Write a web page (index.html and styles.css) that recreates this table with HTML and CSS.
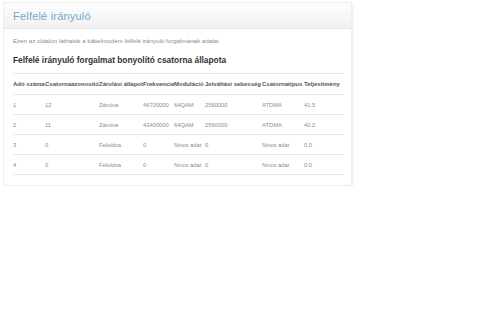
FILE: index.html
```html
<!DOCTYPE html>
<html lang="hu">
<head>
<meta charset="utf-8">
<link rel="stylesheet" href="styles.css">
</head>
<body>
<div class="panel">
  <div class="panel-head"><h1 class="title">Felfelé irányuló</h1></div>
  <div class="panel-body">
    <p class="desc">Ezen az oldalon láthatók a kábelmodem felfelé irányuló forgalmának adatai</p>
    <h2 class="sub">Felfelé irányuló forgalmat bonyolító csatorna állapota</h2>
    <table class="grid">
      <colgroup>
        <col class="c1"><col class="c2"><col class="c3"><col class="c4"><col class="c5"><col class="c6"><col class="c7"><col class="c8">
      </colgroup>
      <thead>
        <tr><th>Adó száma</th><th>Csatornaazonosító</th><th>Zárolási állapot</th><th>Frekvencia</th><th>Moduláció</th><th>Jelváltási sebesség</th><th>Csatornatípus</th><th>Teljesítmény</th></tr>
      </thead>
      <tbody>
        <tr><td>1</td><td>12</td><td>Zárolva</td><td>46700000</td><td>64QAM</td><td>2560000</td><td>ATDMA</td><td>41.5</td></tr>
        <tr><td>2</td><td>11</td><td>Zárolva</td><td>43400000</td><td>64QAM</td><td>2560000</td><td>ATDMA</td><td>40.2</td></tr>
        <tr><td>3</td><td>0</td><td>Feloldva</td><td>0</td><td>Nincs adat</td><td>0</td><td>Nincs adat</td><td>0.0</td></tr>
        <tr><td>4</td><td>0</td><td>Feloldva</td><td>0</td><td>Nincs adat</td><td>0</td><td>Nincs adat</td><td>0.0</td></tr>
      </tbody>
    </table>
  </div>
</div>
</body>
</html>
```
FILE: styles.css
```css
html, body { margin: 0; padding: 0; background: #fff; }
body { font-family: "Liberation Sans", Arial, sans-serif; }
.panel {
  margin: 2px 0 0 3px;
  width: 347px;
  border: 1px solid #eeeeee;
  box-shadow: 1px 1px 2px rgba(0,0,0,0.08);
  background: #fff;
}
.panel-head {
  height: 25px;
  background: linear-gradient(#fdfdfd, #f1f1f1);
  border-bottom: 1px solid #e6e6e6;
  display: flex;
  align-items: center;
  padding-left: 9px;
}
.title {
  margin: 0;
  font-size: 11px;
  font-weight: normal;
  color: #74a9c9;
  letter-spacing: 0.2px;
}
.panel-body { padding: 8px 9px 10px 9px; }
.desc {
  margin: 0;
  font-size: 6.2px;
  line-height: 8px;
  color: #8a8a8a;
}
.sub {
  margin: 10px 0 8px 0;
  font-size: 8.4px;
  line-height: 10px;
  font-weight: bold;
  color: #333;
}
.grid {
  border-collapse: collapse;
  table-layout: fixed;
  width: 331px;
  font-size: 5.8px;
}
.grid col.c1 { width: 32px; }
.grid col.c2 { width: 54px; }
.grid col.c3 { width: 44px; }
.grid col.c4 { width: 31px; }
.grid col.c5 { width: 31px; }
.grid col.c6 { width: 57px; }
.grid col.c7 { width: 42px; }
.grid col.c8 { width: 40px; }
.grid th, .grid td {
  text-align: left;
  padding: 6px 0;
  line-height: 8px;
  border-top: 1px solid #e8e8e8;
  white-space: nowrap;
  overflow: hidden;
}
.grid th { font-weight: bold; color: #555; font-size: 6px; }
.grid td { color: #8c8c8c; padding: 6px 0 5px 0; }
.grid tbody tr:last-child td { border-bottom: 1px solid #e8e8e8; }
```
